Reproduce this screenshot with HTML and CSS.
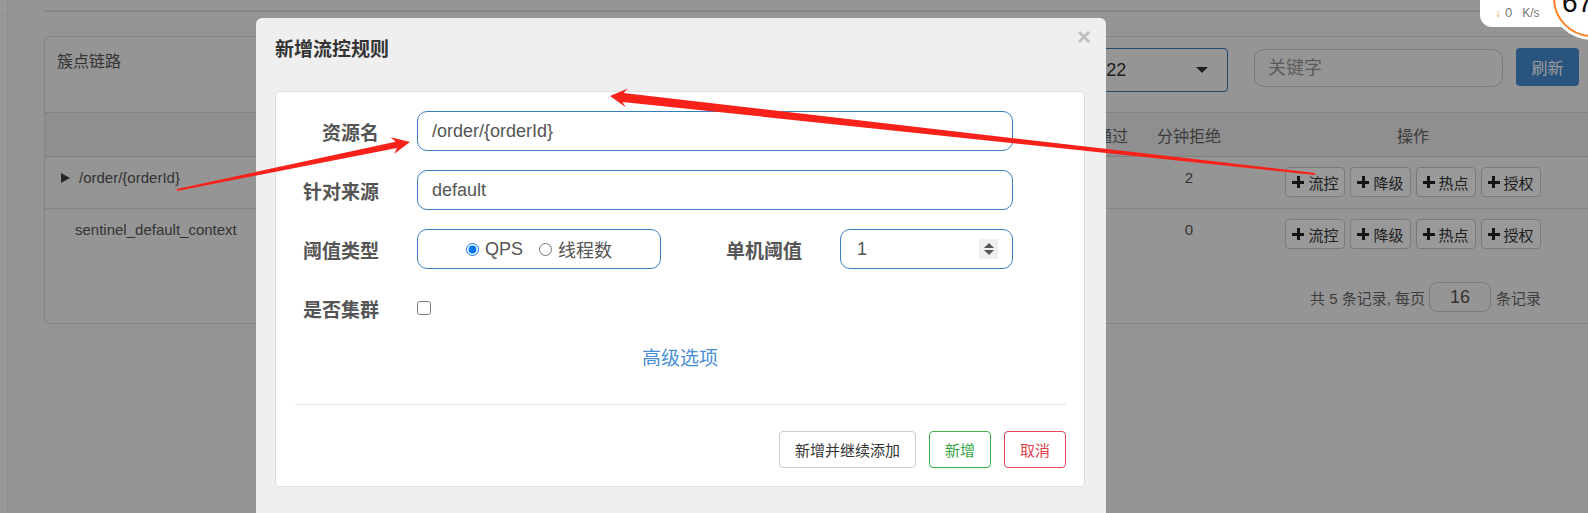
FILE: index.html
```html
<!DOCTYPE html>
<html lang="zh-CN">
<head>
    <meta charset="UTF-8">
    <meta name="viewport" content="width=device-width, initial-scale=1.0">
    <title>Sentinel 控制台</title>
    <link rel="stylesheet" href="styles.css">
</head>
<body>
    <div class="page">
        <aside class="side"><div class="side-top"></div></aside>
        <main class="content">
            <div class="topbar"></div>
            <section class="card">
                <div class="card-head">
                    <h3 class="card-title">簇点链路</h3>
                    <div class="tools">
                        <div class="machine">
                            <span>192.168.31.229:8722</span>
                            <span class="caret"></span>
                        </div>
                        <input class="keyword" type="text" placeholder="关键字">
                        <button class="btn-refresh">刷新</button>
                    </div>
                </div>
                <div class="trow thead">
                    <div class="cell-c">资源名</div>
                    <div class="cell-c">分钟通过</div>
                    <div class="cell-c">分钟拒绝</div>
                    <div class="cell-c">操作</div>
                </div>
                <div class="trow tbody">
                    <div class="name"><span class="tri"></span>/order/{orderId}</div>
                    <div class="cell-c">3</div>
                    <div class="cell-c">2</div>
                    <div class="ops">
                        <button class="op"><span class="plus"></span>流控</button>
                        <button class="op"><span class="plus"></span>降级</button>
                        <button class="op"><span class="plus"></span>热点</button>
                        <button class="op"><span class="plus"></span>授权</button>
                    </div>
                </div>
                <div class="trow tbody last">
                    <div class="name child">sentinel_default_context</div>
                    <div class="cell-c">0</div>
                    <div class="cell-c">0</div>
                    <div class="ops">
                        <button class="op"><span class="plus"></span>流控</button>
                        <button class="op"><span class="plus"></span>降级</button>
                        <button class="op"><span class="plus"></span>热点</button>
                        <button class="op"><span class="plus"></span>授权</button>
                    </div>
                </div>
                <div class="pager">
                    <span>共 5 条记录, 每页</span>
                    <input class="page-size" type="text" value="16">
                    <span>条记录</span>
                </div>
            </section>
        </main>
    </div>

    <div class="backdrop"></div>

    <div class="modal">
        <div class="modal-head">
            <h4 class="modal-title">新增流控规则</h4>
            <button class="close">&times;</button>
        </div>
        <div class="panel">
            <div class="form-row">
                <label class="form-label">资源名</label>
                <input class="form-input" type="text" value="/order/{orderId}">
            </div>
            <div class="form-row">
                <label class="form-label">针对来源</label>
                <input class="form-input" type="text" value="default">
            </div>
            <div class="form-row">
                <label class="form-label">阈值类型</label>
                <div class="radio-box">
                    <label class="radio"><input type="radio" name="grade" checked>QPS</label>
                    <label class="radio"><input type="radio" name="grade">线程数</label>
                </div>
                <label class="form-label inline">单机阈值</label>
                <div class="num-box">
                    <span class="num-val">1</span>
                    <span class="spin"><i class="up"></i><i class="down"></i></span>
                </div>
            </div>
            <div class="form-row">
                <label class="form-label">是否集群</label>
                <input class="check" type="checkbox">
            </div>
            <div class="advanced"><a href="#">高级选项</a></div>
            <hr class="divider">
            <div class="panel-foot">
                <button class="btn btn-default">新增并继续添加</button>
                <button class="btn btn-ok">新增</button>
                <button class="btn btn-cancel">取消</button>
            </div>
        </div>
    </div>

    <!-- 截图标注箭头 -->
    <svg class="arrows" width="1588" height="513" viewBox="0 0 1588 513">
        <polygon points="176.8,189 395.6,141.7 390.7,137.3 410,142 394.1,154 397,148 177.2,191"/>
        <polygon points="1315.1,173 623.4,93 628,88.4 610,96 625.9,107.3 622.4,101.9 1314.9,175"/>
    </svg>

    <div class="netspeed">
        <span class="down-arrow">↓</span><span class="net-num">0</span><span class="net-unit">K/s</span>
    </div>
    <div class="gauge"><span>67</span></div>
</body>
</html>
```

FILE: styles.css
```css
body {
    margin: 0;
    width: 1588px;
    height: 513px;
    position: relative;
    overflow: hidden;
    font-family: "Liberation Sans", "Noto Sans CJK SC", sans-serif;
    background: #f9f9f9;
    color: #555;
}

button, input {
    font-family: "Liberation Sans", "Noto Sans CJK SC", sans-serif;
}

.page {
    display: flex;
    height: 513px;
}

.side {
    width: 7px;
    background: #fff;
    border-right: 1px solid #ececec;
    flex-shrink: 0;
}

.side-top {
    height: 14px;
    border-bottom: 1px solid #efefef;
}

.content {
    flex: 1;
    padding-left: 36px;
}

.topbar {
    height: 10px;
    border-bottom: 2px solid #e2e2e2;
}

/* 簇点链路卡片 */
.card {
    width: 1552px;
    box-sizing: border-box;
    margin-top: 24px;
    border: 1px solid #dcdcdc;
    border-radius: 6px;
    padding-bottom: 11px;
}

.card-head {
    display: flex;
    align-items: flex-start;
    height: 75px;
    box-sizing: border-box;
    padding: 11px 16px 0 12px;
}

.card-title {
    margin: 3px 0 0;
    font-size: 16px;
    line-height: 22px;
    font-weight: normal;
    color: #555;
}

.tools {
    margin-left: auto;
    display: flex;
    align-items: flex-start;
}

.machine {
    width: 285px;
    height: 44px;
    box-sizing: border-box;
    border: 1px solid #337ab7;
    border-radius: 4px;
    display: flex;
    align-items: center;
    justify-content: space-between;
    padding: 0 19px 0 12px;
    font-size: 18px;
    color: #333;
}

.caret {
    width: 0;
    height: 0;
    border-left: 6px solid transparent;
    border-right: 6px solid transparent;
    border-top: 6px solid #333;
}

.keyword {
    width: 249px;
    height: 38px;
    box-sizing: border-box;
    margin: 1px 0 0 26px;
    border: 1px solid #ccc;
    border-radius: 10px;
    padding: 0 13px;
    font-size: 18px;
    background: transparent;
}

.keyword::placeholder {
    color: #999;
}

.btn-refresh {
    width: 63px;
    height: 38px;
    margin-left: 13px;
    border: none;
    border-radius: 4px;
    background: #458dd3;
    color: #fff;
    font-size: 16px;
}

.trow {
    display: grid;
    grid-template-columns: 1000px 102px 84px 364px;
}

.thead {
    height: 45px;
    box-sizing: border-box;
    align-items: center;
    background: #eee;
    border-top: 1px solid #d5d5d5;
    border-bottom: 1px solid #d5d5d5;
    font-size: 16px;
    color: #666;
}

.cell-c {
    text-align: center;
}

.tbody {
    padding: 10px 0 11px;
    align-items: start;
    border-bottom: 1px solid #ddd;
    font-size: 15px;
    line-height: 22px;
    color: #555;
}

.tbody.last {
    border-bottom: none;
}

.name {
    display: flex;
    align-items: center;
    gap: 9px;
    padding-left: 16px;
}

.name.child {
    padding-left: 30px;
}

.tri {
    width: 0;
    height: 0;
    border-left: 9px solid #444;
    border-top: 5px solid transparent;
    border-bottom: 5px solid transparent;
}

.ops {
    display: flex;
    justify-content: center;
    gap: 5px;
}

.op {
    height: 30px;
    display: inline-flex;
    align-items: center;
    gap: 4px;
    padding: 0 6px;
    border: 1px solid #ccc;
    border-radius: 4px;
    background: #fff;
    font-size: 15px;
    color: #333;
}

.plus {
    width: 12px;
    height: 12px;
    background:
        linear-gradient(#222, #222) center / 12px 3px no-repeat,
        linear-gradient(#222, #222) center / 3px 12px no-repeat;
}

.pager {
    display: flex;
    justify-content: flex-end;
    align-items: center;
    gap: 4px;
    height: 30px;
    margin-top: 22px;
    padding-right: 54px;
    font-size: 15px;
    color: #666;
}

.page-size {
    width: 62px;
    height: 30px;
    box-sizing: border-box;
    margin-right: 1px;
    border: 1px solid #ccc;
    border-radius: 8px;
    text-align: center;
    font-size: 18px;
    color: #555;
    background: transparent;
}

.backdrop {
    position: absolute;
    inset: 0;
    background: rgba(0, 0, 0, 0.4);
    z-index: 10;
}

/* 弹窗 */
.modal {
    position: absolute;
    left: 256px;
    top: 18px;
    width: 850px;
    height: 510px;
    box-sizing: border-box;
    padding: 0 21px 0 19px;
    background: #efefef;
    border-radius: 6px;
    z-index: 20;
}

.modal-head {
    display: flex;
    justify-content: space-between;
    align-items: flex-start;
    height: 73px;
}

.modal-title {
    margin: 0;
    padding-top: 20px;
    font-size: 19px;
    line-height: 24px;
    font-weight: bold;
    color: #333;
}

.close {
    margin: 7px -6px 0 0;
    padding: 0;
    border: none;
    background: none;
    font-size: 24px;
    line-height: 24px;
    font-weight: bold;
    color: #000;
    opacity: 0.2;
}

.panel {
    background: #fff;
    border: 1px solid #ddd;
    border-radius: 4px;
    padding-top: 19px;
}

.form-row {
    display: flex;
    align-items: center;
    height: 40px;
    margin-bottom: 19px;
}

.form-label {
    width: 103px;
    flex-shrink: 0;
    margin-right: 38px;
    text-align: right;
    font-size: 19px;
    font-weight: bold;
    color: #555;
}

.form-label.inline {
    width: 141px;
}

.form-input {
    width: 596px;
    height: 40px;
    box-sizing: border-box;
    padding: 0 14px;
    border: 1px solid #3a7dbf;
    border-radius: 10px;
    font-size: 18px;
    color: #555;
    outline: none;
}

.radio-box {
    width: 244px;
    height: 40px;
    box-sizing: border-box;
    border: 1px solid #3a7dbf;
    border-radius: 10px;
    display: flex;
    align-items: center;
    justify-content: center;
    gap: 16px;
    font-size: 18px;
    color: #555;
}

.radio {
    display: flex;
    align-items: center;
    gap: 6px;
}

.radio input {
    margin: 0;
    width: 13px;
    height: 13px;
}

.num-box {
    width: 173px;
    height: 40px;
    box-sizing: border-box;
    border: 1px solid #3a7dbf;
    border-radius: 10px;
    display: flex;
    align-items: center;
    justify-content: space-between;
    padding: 0 14px 0 16px;
    font-size: 18px;
    color: #555;
}

.spin {
    width: 19px;
    height: 20px;
    background: #f0f0f0;
    display: flex;
    flex-direction: column;
    align-items: center;
    justify-content: center;
    gap: 2px;
}

.spin .up {
    border-left: 5px solid transparent;
    border-right: 5px solid transparent;
    border-bottom: 5px solid #555;
}

.spin .down {
    border-left: 5px solid transparent;
    border-right: 5px solid transparent;
    border-top: 5px solid #555;
}

.check {
    margin: 0;
    width: 14px;
    height: 14px;
}

.advanced {
    text-align: center;
    font-size: 19px;
    line-height: 24px;
}

.advanced a {
    color: #4a8fd6;
    text-decoration: none;
}

.divider {
    margin: 33px 18px 0 19px;
    border: 0;
    border-top: 1px solid #e5e5e5;
}

.panel-foot {
    display: flex;
    justify-content: flex-end;
    gap: 13px;
    padding: 26px 18px 18px;
}

.btn {
    height: 37px;
    padding: 0 15px;
    border: 1px solid #ccc;
    border-radius: 4px;
    background: #fff;
    font-size: 15px;
    color: #333;
}

.btn-ok {
    border-color: #3db04c;
    color: #33a444;
}

.btn-cancel {
    border-color: #e0455a;
    color: #e3404f;
}

.arrows {
    position: absolute;
    left: 0;
    top: 0;
    z-index: 30;
    pointer-events: none;
    fill: #f8221a;
}

/* 右上角网速悬浮窗 */
.netspeed {
    position: absolute;
    top: 0;
    left: 1480px;
    width: 110px;
    height: 27px;
    box-sizing: border-box;
    padding: 5px 0 0 15px;
    background: #fff;
    border-bottom-left-radius: 12px;
    font-size: 12px;
    line-height: 16px;
    color: #777;
    z-index: 40;
}

.down-arrow {
    color: #f39b4b;
}

.net-num {
    margin-left: 4px;
    font-size: 13px;
}

.net-unit {
    margin-left: 10px;
}

.gauge {
    position: absolute;
    left: 1553px;
    top: -41px;
    width: 78px;
    height: 78px;
    box-sizing: border-box;
    border: 2.5px solid #ff7f27;
    border-radius: 50%;
    background: #fff;
    box-shadow: 0 0 0 3px #fff;
    padding: 28px 0 0 7px;
    font-size: 28px;
    line-height: 28px;
    color: #111;
    z-index: 41;
}
```
